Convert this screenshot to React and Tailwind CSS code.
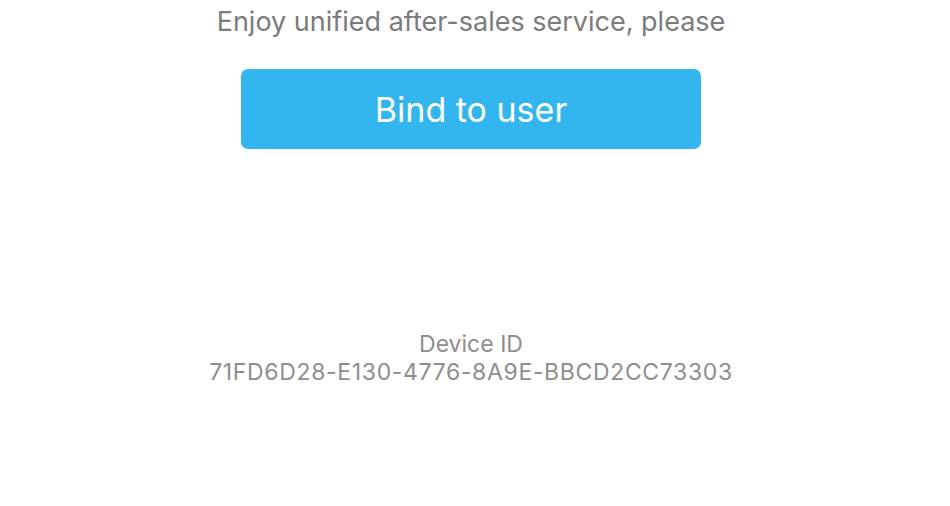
import React from 'react';

export default function App() {
  return (
    <div className="w-[950px] h-[506px] bg-white flex flex-col items-center pr-2 font-['Inter',sans-serif] overflow-hidden">
      {/* Prompt */}
      <p className="mt-[5px] text-[27px] leading-[34px] text-[#7b7b7b]">
        Enjoy unified after-sales service, please
      </p>

      {/* Bind button */}
      <button className="mt-[30px] w-[460px] h-[80px] rounded-[7px] bg-[#33b5ef] text-white text-[34px] font-normal flex items-center justify-center">
        Bind to user
      </button>

      {/* Device info */}
      <div className="mt-[181px] flex flex-col items-center text-[23px] leading-[28px] text-[#8e8e8e]">
        <span>Device ID</span>
        <span className="tracking-[0.65px]">71FD6D28-E130-4776-8A9E-BBCD2CC73303</span>
      </div>
    </div>
  );
}
